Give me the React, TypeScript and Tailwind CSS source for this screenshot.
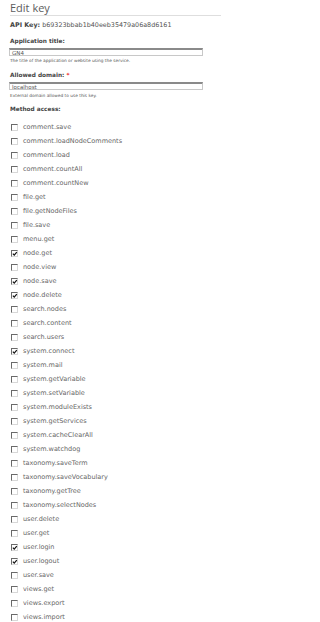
const methods: [string, boolean][] = [
  ["comment.save", false],
  ["comment.loadNodeComments", false],
  ["comment.load", false],
  ["comment.countAll", false],
  ["comment.countNew", false],
  ["file.get", false],
  ["file.getNodeFiles", false],
  ["file.save", false],
  ["menu.get", false],
  ["node.get", true],
  ["node.view", false],
  ["node.save", true],
  ["node.delete", true],
  ["search.nodes", false],
  ["search.content", false],
  ["search.users", false],
  ["system.connect", true],
  ["system.mail", false],
  ["system.getVariable", false],
  ["system.setVariable", false],
  ["system.moduleExists", false],
  ["system.getServices", false],
  ["system.cacheClearAll", false],
  ["system.watchdog", false],
  ["taxonomy.saveTerm", false],
  ["taxonomy.saveVocabulary", false],
  ["taxonomy.getTree", false],
  ["taxonomy.selectNodes", false],
  ["user.delete", false],
  ["user.get", false],
  ["user.login", true],
  ["user.logout", true],
  ["user.save", false],
  ["views.get", false],
  ["views.export", false],
  ["views.import", false],
];

function Checkbox({ checked }: { checked: boolean }) {
  return (
    <span className="relative w-[7px] h-[7px] shrink-0 bg-white border-t border-l border-t-[#6a6a6a] border-l-[#6a6a6a] border-b border-r border-b-[#d8d8d8] border-r-[#d8d8d8]">
      {checked && (
        <svg viewBox="0 0 7 7" className="absolute left-0 top-0 w-[6px] h-[6px]">
          <path d="M1 3 L2.6 4.8 L5.6 1.2" fill="none" stroke="#111" strokeWidth="1.4" />
        </svg>
      )}
    </span>
  );
}

function TextInput({ value }: { value: string }) {
  return (
    <div className="mt-[2px] ml-[-1px] w-[194px] h-[8px] flex items-center px-[2px] bg-white border border-[#c8c8c8] border-t-2 border-t-[#8a8a8a] text-[5.5px] leading-[6px] text-[#555]">
      {value}
    </div>
  );
}

export default function App() {
  return (
    <div className="w-[221px] h-[622px] bg-white overflow-hidden px-[10px] text-[#555]" style={{ fontFamily: '"DejaVu Sans", Verdana, sans-serif' }}>
      <h1
        className="h-[16px] leading-[15px] text-[11px] text-[#5c5c5c] border-b border-[#dedede] mr-[-10px] pl-[0px]"
        style={{ fontFamily: '"Open Sans", sans-serif' }}
      >
        Edit key
      </h1>

      <div className="mt-[4px] h-[10px] leading-[10px] text-[6.4px] whitespace-nowrap">
        <span className="font-bold text-[#444]">API Key:</span> b69323bbab1b40eeb35479a06a8d6161
      </div>

      <div className="mt-[6px] h-[10px] leading-[10px] text-[5.8px] font-bold text-[#444]">Application title:</div>
      <TextInput value="GN4" />
      <div className="mt-[2px] h-[6px] leading-[6px] text-[4.3px] text-[#555] whitespace-nowrap">
        The title of the application or website using the service.
      </div>

      <div className="mt-[6px] h-[10px] leading-[10px] text-[5.8px] font-bold text-[#444]">
        Allowed domain: <span className="text-[#e22]">*</span>
      </div>
      <TextInput value="localhost" />
      <div className="mt-[3px] h-[6px] leading-[6px] text-[4.3px] text-[#555] whitespace-nowrap">
        External domain allowed to use this key.
      </div>

      <div className="mt-[5px] h-[10px] leading-[10px] text-[5.8px] font-bold text-[#444]">Method access:</div>

      <ul className="mt-[6px] flex flex-col">
        {methods.map(([name, checked]) => (
          <li key={name} className="h-[14px] flex items-center pl-[1px]">
            <Checkbox checked={checked} />
            <span className="ml-[5px] text-[6.5px] leading-[14px] text-[#666] whitespace-nowrap">{name}</span>
          </li>
        ))}
      </ul>
    </div>
  );
}
